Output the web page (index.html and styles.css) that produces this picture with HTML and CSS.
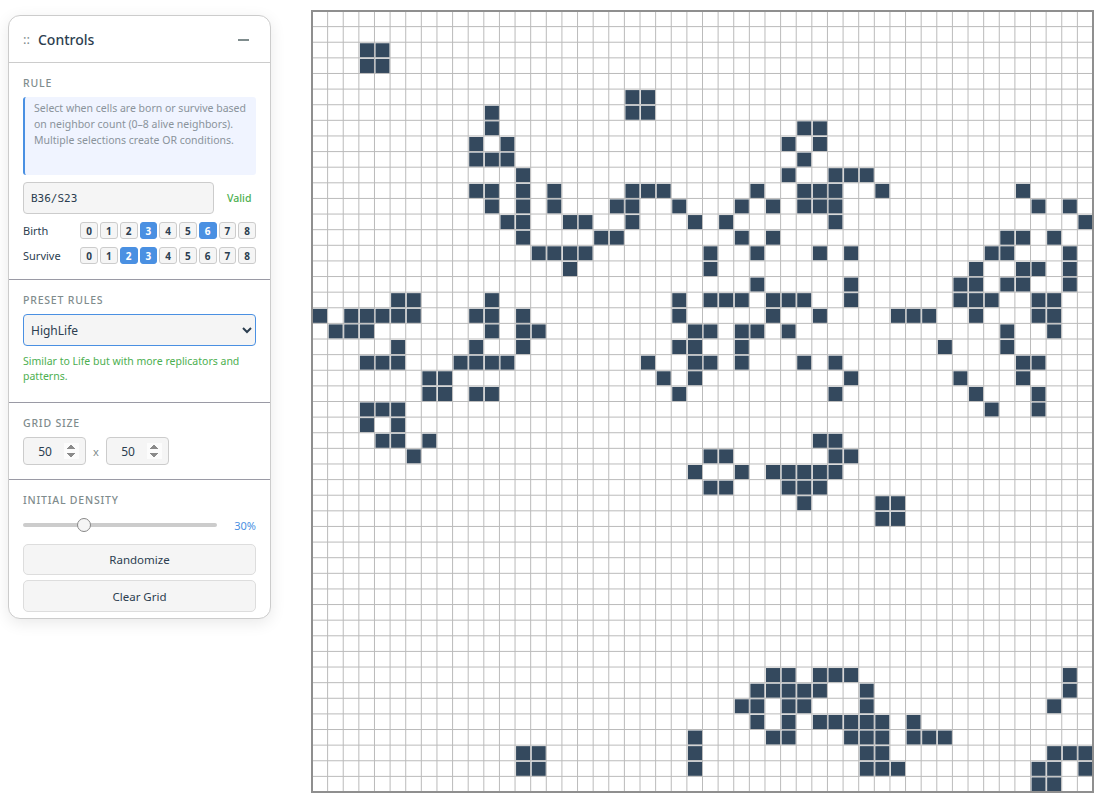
FILE: index.html
```html
<!DOCTYPE html>
<html lang="en">
<head>
<meta charset="utf-8">
<title>Cellular Automaton</title>
<link rel="stylesheet" href="styles.css">
</head>
<body>
<div class="app">
  <aside class="panel">
    <header class="panel-head">
      <span class="grip">::</span>
      <h1 class="panel-title">Controls</h1>
      <button class="collapse" type="button" aria-label="Collapse"></button>
    </header>
    <section class="section section-rule">
      <h2 class="label">Rule</h2>
      <p class="info">Select when cells are born or survive based on neighbor count (0–8 alive neighbors). Multiple selections create OR conditions.</p>
      <div class="rule-row">
        <input class="rule-input" type="text" value="B36/S23">
        <span class="valid">Valid</span>
      </div>
      <div class="count-row">
        <span class="count-label">Birth</span>
        <div class="counts">
          <button class="count" type="button">0</button><button class="count" type="button">1</button><button class="count" type="button">2</button><button class="count on" type="button">3</button><button class="count" type="button">4</button><button class="count" type="button">5</button><button class="count on" type="button">6</button><button class="count" type="button">7</button><button class="count" type="button">8</button>
        </div>
      </div>
      <div class="count-row">
        <span class="count-label">Survive</span>
        <div class="counts">
          <button class="count" type="button">0</button><button class="count" type="button">1</button><button class="count on" type="button">2</button><button class="count on" type="button">3</button><button class="count" type="button">4</button><button class="count" type="button">5</button><button class="count" type="button">6</button><button class="count" type="button">7</button><button class="count" type="button">8</button>
        </div>
      </div>
    </section>
    <section class="section section-preset">
      <h2 class="label">Preset Rules</h2>
      <select class="preset">
        <option>HighLife</option>
        <option>Conway's Life</option>
        <option>Seeds</option>
      </select>
      <p class="preset-desc">Similar to Life but with more replicators and patterns.</p>
    </section>
    <section class="section section-size">
      <h2 class="label">Grid Size</h2>
      <div class="size-row">
        <input class="size" type="number" value="50">
        <span class="times">x</span>
        <input class="size" type="number" value="50">
      </div>
    </section>
    <section class="section section-density">
      <h2 class="label">Initial Density</h2>
      <div class="density-row">
        <input class="slider" type="range" min="0" max="100" value="30">
        <span class="density-value">30%</span>
      </div>
      <button class="action" type="button">Randomize</button>
      <button class="action action-last" type="button">Clear Grid</button>
    </section>
  </aside>
  <main class="stage">
    <canvas id="grid" class="grid" width="784" height="784"></canvas>
  </main>
</div>
<script src="grid.js"></script>
</body>
</html>
```
FILE: styles.css
```css
* { box-sizing: border-box; }
html, body { margin: 0; height: 100%; background: #fff; overflow: hidden; }
body { font-family: "Noto Sans", "Open Sans", sans-serif; color: #2c3e50; }
.app { display: flex; align-items: flex-start; padding: 8px 8px 0; }
.panel {
  flex: 0 0 263px; width: 263px; margin-top: 7px; background: #fff;
  border: 1px solid #ccc; border-radius: 12px;
  box-shadow: 0 4px 16px rgba(0, 0, 0, .09);
}
.panel-head { display: flex; align-items: center; height: 47px; padding: 0 14px; border-bottom: 1px solid #ccc; }
.grip { font-size: 13px; color: #7f8c8d; margin-right: 8px; }
.panel-title { margin: 0; font-size: 14px; font-weight: 500; flex: 1; }
.collapse { position: relative; width: 24px; height: 24px; padding: 0; border: 0; background: none; }
.collapse::before { content: ""; position: absolute; left: 6px; right: 7px; top: 12px; height: 2px; background: #7f8c8d; }
.section { padding: 13px 14px 0; border-bottom: 1px solid #9a9aa5; }
.section:last-child { border-bottom: 0; }
.section-rule { height: 217px; }
.section-preset { height: 123px; }
.section-size { height: 77px; }
.section-density { height: 138px; }
.label { margin: 0 0 7px; font-size: 10.5px; line-height: 14px; font-weight: 500; color: #7f8c8d; text-transform: uppercase; letter-spacing: .8px; }
.info { margin: 0 0 7px; padding: 3px 9px 3px 9px; width: 233px; height: 78px; background: #f0f4ff; border-left: 2px solid #4a90e2; border-radius: 3px; font-size: 10.5px; line-height: 16px; color: #8a939b; }
.rule-row { display: flex; align-items: center; }
.rule-input { width: 191px; height: 32px; padding: 0 7px; background: #f5f5f5; border: 1px solid #ccc; border-radius: 4px; font: 11px "DejaVu Sans Mono", monospace; color: #2c3e50; }
.valid { margin-left: 13px; font-size: 10.5px; font-weight: 500; color: #4caf50; }
.count-row { display: flex; align-items: center; height: 17px; margin-top: 8px; }
.count-row + .count-row { margin-top: 8px; }
.count-label { width: 61px; font-size: 11px; }
.counts { display: flex; gap: 2px; }
.count { width: 17.75px; height: 17px; padding: 0; background: #f5f5f5; border: 1px solid #ccc; border-radius: 3px; font: 700 10px "Noto Sans", sans-serif; color: #2c3e50; }
.count.on { background: #4a90e2; border-color: #4a90e2; color: #fff; }
.preset { display: block; width: 233px; height: 32px; padding: 0 2px 0 3px; background-color: #f5f5f5; border: 1px solid #4a90e2; border-radius: 4px; font: 12px "Noto Sans", sans-serif; color: #2c3e50; outline: 0; }
.preset-desc { margin: 8px 0 0; font-size: 10.5px; line-height: 15px; color: #4caf50; }
.size-row { display: flex; align-items: center; }
.size { width: 63px; height: 28px; padding: 0 6px 0 2px; background: #f5f5f5; border: 1px solid #ccc; border-radius: 4px; font: 12px "Noto Sans", sans-serif; color: #2c3e50; text-align: center; }
.size::-webkit-inner-spin-button { opacity: 1; }
.times { width: 20px; text-align: center; font-size: 11px; color: #7f8c8d; }
.density-row { display: flex; align-items: center; height: 24px; margin-top: -1px; margin-bottom: 7px; }
.slider { -webkit-appearance: none; appearance: none; width: 194px; height: 4px; margin: 0; background: #ccc; border-radius: 2px; outline: 0; }
.slider::-webkit-slider-thumb { -webkit-appearance: none; width: 14px; height: 14px; background: #f5f5f5; border: 1px solid #888; border-radius: 50%; }
.density-value { margin-left: auto; font-size: 11px; color: #4a90e2; }
.action { display: block; width: 233px; height: 31px; padding: 0; background: #f5f5f5; border: 1px solid #ddd; border-radius: 5px; font: 11.5px "Noto Sans", sans-serif; color: #2c3e50; }
.action-last { height: 32px; margin-top: 5px; }
.stage { flex: none; margin-left: 39px; margin-top: 1px; }
.grid { display: block; width: 784px; height: 784px; }
```
FILE: grid.js
```js
var LIVE = {
  2:[3,4],3:[3,4],5:[20,21],6:[11,20,21],7:[11,31,32],8:[10,12,30,32],9:[10,11,12,31],
  10:[13,30,33,34,35],11:[10,11,13,15,20,21,22,28,31,32,33,36,45],
  12:[11,13,15,19,20,23,27,29,31,32,33,46,48],13:[12,13,16,17,20,24,26,33,49],
  14:[13,18,19,27,29,44,45,47],15:[14,15,16,17,25,28,32,34,43,44,48],
  16:[16,25,42,45,46,48],17:[28,34,41,42,44,45,48],
  18:[5,6,11,23,25,26,27,29,30,31,34,41,42,43,46,47],
  19:[0,2,3,4,5,6,10,11,13,23,29,32,37,38,39,42,46,47],
  20:[1,2,3,11,13,14,24,25,27,28,30,44,47],21:[5,10,13,23,24,27,40,44],
  22:[3,4,5,9,10,11,12,21,24,25,27,31,33,45,46],23:[7,8,22,24,34,41,45],
  24:[7,8,10,11,23,33,42,46],25:[3,4,5,43,46],26:[3,5],27:[4,5,7,32,33],
  28:[6,25,26,33,34],29:[24,27,29,30,31,32,33],30:[25,26,30,31,32],31:[31,36,37],32:[36,37],
  42:[29,30,32,33,34,48],43:[28,29,30,31,32,35,48],44:[27,28,30,31,35,47],
  45:[28,30,32,33,34,35,36,38],46:[24,29,30,34,35,36,38,39,40],47:[13,14,24,35,36,47,48,49],
  48:[13,14,24,35,36,37,46,47,49],49:[46,47]
};
var N = 50, CELL = 15.62, ORIGIN = 2;
var ctx = document.getElementById("grid").getContext("2d");

ctx.fillStyle = "#fff";
ctx.fillRect(0, 0, 784, 784);

ctx.fillStyle = "#34495e";
Object.keys(LIVE).forEach(function (row) {
  LIVE[row].forEach(function (col) {
    ctx.fillRect(ORIGIN + col * CELL + 1, ORIGIN + row * CELL + 1, CELL - 1.5, CELL - 1.5);
  });
});

ctx.strokeStyle = "#bbb";
ctx.lineWidth = 1;
for (var i = 1; i < N; i++) {
  var p = ORIGIN + i * CELL;
  ctx.beginPath();
  ctx.moveTo(p, ORIGIN);
  ctx.lineTo(p, ORIGIN + N * CELL);
  ctx.moveTo(ORIGIN, p);
  ctx.lineTo(ORIGIN + N * CELL, p);
  ctx.stroke();
}

ctx.strokeStyle = "#8f8f8f";
ctx.lineWidth = 2;
ctx.strokeRect(ORIGIN, ORIGIN, N * CELL, N * CELL);
```
